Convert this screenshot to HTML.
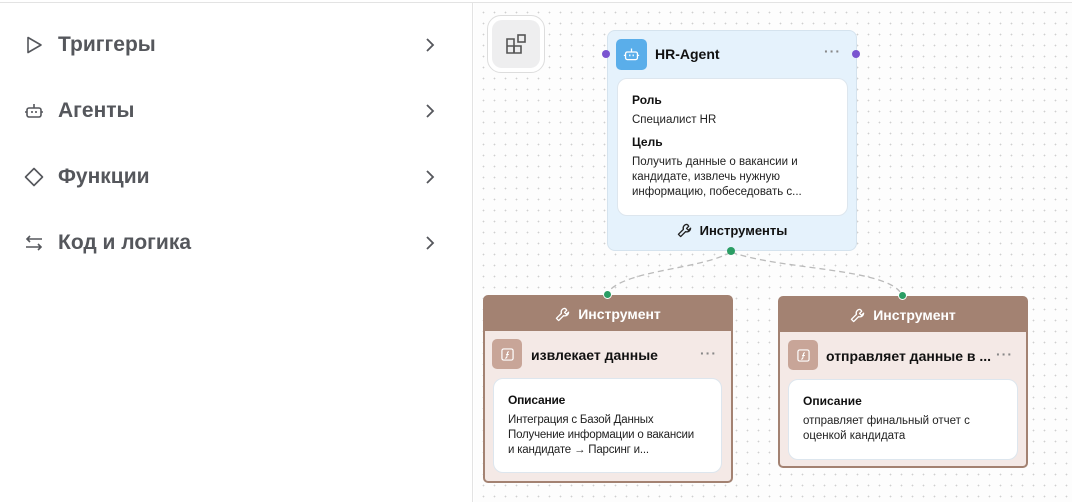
<!DOCTYPE html>
<html><head><meta charset="utf-8"><style>
*{box-sizing:border-box;margin:0;padding:0}
body{width:1072px;height:502px;overflow:hidden;background:#fff;font-family:"Liberation Sans","Noto Sans CJK SC",sans-serif;position:relative}
.top{position:absolute;left:0;top:2px;width:1072px;height:1px;background:#e3e3e3}
.left{position:absolute;left:0;top:3px;width:473px;height:499px;background:#fff;border-right:1px solid #e3e3e3}
.item{position:absolute;left:24px;width:420px;height:30px;display:flex;align-items:center;color:#55575c;font-weight:bold;font-size:21px}
.item svg.ic{position:absolute;left:0}
.item span{position:absolute;left:34px}
.item svg.ch{position:absolute;left:400px}
.canvas{position:absolute;left:474px;top:3px;width:598px;height:499px;background-color:#fdfdfd;background-image:radial-gradient(circle,#cfcfcf 0.7px,transparent 1px);background-size:11px 11px;background-position:4px 4px}
.abs{position:absolute}
.hr{left:607px;top:30px;width:250px;height:221px;background:#e5f2fc;border:1px solid #d5e3ee;border-radius:8px}
.card{background:#fff;border:1px solid #dde6ee;border-radius:10px;font-size:11.5px;color:#222;line-height:15px}
.card b{font-size:12px;color:#111}
.dot{position:absolute;width:8px;height:8px;border-radius:50%}
.tool{background:#f4e9e6;border:2px solid #a38272;border-radius:5px}
.tool .hd{height:34px;background:#a38272;color:#fff;font-weight:bold;font-size:14px;display:flex;align-items:center;justify-content:center;gap:8px}
.fic{position:absolute;width:30px;height:30px;background:#c8a598;border-radius:5px;display:flex;align-items:center;justify-content:center}
.ttl{position:absolute;font-weight:bold;font-size:14px;color:#111;white-space:nowrap}
.dots3{position:absolute;color:#888;font-size:14px;letter-spacing:1px;font-weight:bold}
</style></head><body>
<div class="left">
 <div class="item" style="top:27px"><svg class="ic" width="20" height="20" viewBox="0 0 20 20"><path d="M4 2.5 L17 10 L4 17.5 Z" fill="none" stroke="#55575c" stroke-width="1.6" stroke-linejoin="round"/></svg><span>Триггеры</span><svg class="ch" width="12" height="18" viewBox="0 0 12 18"><path d="M3 3 L9 9 L3 15" fill="none" stroke="#55575c" stroke-width="1.8"/></svg></div>
 <div class="item" style="top:93px"><svg class="ic" width="20" height="20" viewBox="0 0 20 20"><rect x="3" y="7" width="14" height="9" rx="2" fill="none" stroke="#55575c" stroke-width="1.6"/><path d="M10 3v4M1 11h2M17 11h2M8 10v2M12 10v2" stroke="#55575c" stroke-width="1.6"/></svg><span>Агенты</span><svg class="ch" width="12" height="18" viewBox="0 0 12 18"><path d="M3 3 L9 9 L3 15" fill="none" stroke="#55575c" stroke-width="1.8"/></svg></div>
 <div class="item" style="top:159px"><svg class="ic" width="20" height="20" viewBox="0 0 20 20"><path d="M10 1.5 L18.5 10 L10 18.5 L1.5 10 Z" fill="none" stroke="#55575c" stroke-width="1.6" stroke-linejoin="round"/></svg><span>Функции</span><svg class="ch" width="12" height="18" viewBox="0 0 12 18"><path d="M3 3 L9 9 L3 15" fill="none" stroke="#55575c" stroke-width="1.8"/></svg></div>
 <div class="item" style="top:225px"><svg class="ic" width="20" height="20" viewBox="0 0 20 20"><path d="M18 6H3M6 3L3 6l3 3M2 14h15M14 11l3 3-3 3" fill="none" stroke="#55575c" stroke-width="1.6"/></svg><span>Код и логика</span><svg class="ch" width="12" height="18" viewBox="0 0 12 18"><path d="M3 3 L9 9 L3 15" fill="none" stroke="#55575c" stroke-width="1.8"/></svg></div>
</div>
<div class="canvas"></div>
<div class="top"></div>
<div class="abs" style="left:487px;top:15px;width:58px;height:58px;border:1px solid #ddd;border-radius:14px;background:#fff"><div style="position:absolute;left:4px;top:4px;width:48px;height:48px;background:#eeeeef;border-radius:10px"><svg style="position:absolute;left:12px;top:12px" width="24" height="24" viewBox="0 0 24 24"><path d="M3 7h7v14H3zM3 14h14v7H10" fill="none" stroke="#555" stroke-width="1.6"/><rect x="14" y="3" width="7" height="7" fill="none" stroke="#555" stroke-width="1.6"/><path d="M10 14v7" stroke="#555" stroke-width="1.6"/></svg></div></div>
<svg class="abs" style="left:0;top:0" width="1072" height="502"><path d="M731 252 C700 270 620 270 607 294" fill="none" stroke="#bbb" stroke-width="1.3" stroke-dasharray="6 4"/><path d="M731 252 C780 270 890 268 902 295" fill="none" stroke="#bbb" stroke-width="1.3" stroke-dasharray="6 4"/></svg>
<div class="abs hr">
 <div class="abs" style="left:8px;top:8px;width:31px;height:31px;background:#5aaeea;border-radius:5px"><svg style="position:absolute;left:7px;top:7px" width="17" height="17" viewBox="0 0 20 20"><rect x="3" y="7" width="14" height="9" rx="2" fill="none" stroke="#fff" stroke-width="1.5"/><path d="M10 3v4M1 11h2M17 11h2M8 10v2M12 10v2" stroke="#fff" stroke-width="1.5"/></svg></div>
 <div class="ttl" style="left:47px;top:15px">HR-Agent</div>
 <div class="dots3" style="left:216px;top:12px">···</div>
 <div class="abs card" style="left:9px;top:47px;width:231px;height:138px;padding:14px 14px">
  <b>Роль</b><div style="margin-top:4px">Специалист HR</div>
  <b style="display:block;margin-top:7px">Цель</b><div style="margin-top:5px;line-height:15px">Получить данные о вакансии и кандидате, извлечь нужную информацию, побеседовать с...</div>
 </div>
 <div class="abs" style="left:0;top:192px;width:248px;text-align:center;font-weight:bold;font-size:13px;color:#111"><span style="display:inline-flex;gap:8px;align-items:center"><svg width="15" height="15" viewBox="0 0 16 16"><path d="M10.5 1.5a4 4 0 0 0-3.7 5.3L1.5 12.1l2.4 2.4 5.3-5.3A4 4 0 0 0 14.5 5.5l-2.3 2.3-2-2 2.3-2.3a4 4 0 0 0-2-2z" fill="none" stroke="#222" stroke-width="1.4" stroke-linejoin="round"/></svg>Инструменты</span></div>
</div>
<div class="dot" style="left:602px;top:50px;background:#7a55d0"></div>
<div class="dot" style="left:852px;top:50px;background:#7a55d0"></div>
<div class="dot" style="left:727px;top:247px;background:#2a9d64"></div>

<div class="abs tool" style="left:483px;top:295px;width:250px;height:188px">
 <div class="hd"><svg width="15" height="15" viewBox="0 0 16 16"><path d="M10.5 1.5a4 4 0 0 0-3.7 5.3L1.5 12.1l2.4 2.4 5.3-5.3A4 4 0 0 0 14.5 5.5l-2.3 2.3-2-2 2.3-2.3a4 4 0 0 0-2-2z" fill="none" stroke="#fff" stroke-width="1.4" stroke-linejoin="round"/></svg>Инструмент</div>
 <div class="fic" style="left:7px;top:42px"><svg width="13" height="13" viewBox="0 0 14 14"><rect x="1" y="1" width="12" height="12" rx="2" fill="none" stroke="#fff" stroke-width="1.3"/><path d="M8.5 4c-1.5 0-1.5 1-1.8 3l-.4 2.5c-.2 1-.6 1.5-1.8 1.5M5.5 7h3" fill="none" stroke="#fff" stroke-width="1.2"/></svg></div>
 <div class="ttl" style="left:46px;top:50px">извлекает данные</div>
 <div class="dots3" style="left:215px;top:48px">···</div>
 <div class="abs card" style="left:8px;top:81px;width:229px;height:95px;padding:14px 12px 0 14px;letter-spacing:-0.2px"><b>Описание</b><div style="margin-top:4px">Интеграция с Базой Данных<br>Получение информации о вакансии<br>и кандидате → Парсинг и...</div></div>
</div>
<div class="abs tool" style="left:778px;top:296px;width:250px;height:172px">
 <div class="hd"><svg width="15" height="15" viewBox="0 0 16 16"><path d="M10.5 1.5a4 4 0 0 0-3.7 5.3L1.5 12.1l2.4 2.4 5.3-5.3A4 4 0 0 0 14.5 5.5l-2.3 2.3-2-2 2.3-2.3a4 4 0 0 0-2-2z" fill="none" stroke="#fff" stroke-width="1.4" stroke-linejoin="round"/></svg>Инструмент</div>
 <div class="fic" style="left:8px;top:42px"><svg width="13" height="13" viewBox="0 0 14 14"><rect x="1" y="1" width="12" height="12" rx="2" fill="none" stroke="#fff" stroke-width="1.3"/><path d="M8.5 4c-1.5 0-1.5 1-1.8 3l-.4 2.5c-.2 1-.6 1.5-1.8 1.5M5.5 7h3" fill="none" stroke="#fff" stroke-width="1.2"/></svg></div>
 <div class="ttl" style="left:46px;top:50px">отправляет данные в ...</div>
 <div class="dots3" style="left:216px;top:48px">···</div>
 <div class="abs card" style="left:8px;top:81px;width:230px;height:81px;padding:14px 14px"><b>Описание</b><div style="margin-top:4px">отправляет финальный отчет с<br>оценкой кандидата</div></div>
</div>
<div class="dot" style="left:603px;top:290px;background:#2a9d64;border:1px solid #fff;width:9px;height:9px"></div>
<div class="dot" style="left:898px;top:291px;background:#2a9d64;border:1px solid #fff;width:9px;height:9px"></div>
</body></html>
